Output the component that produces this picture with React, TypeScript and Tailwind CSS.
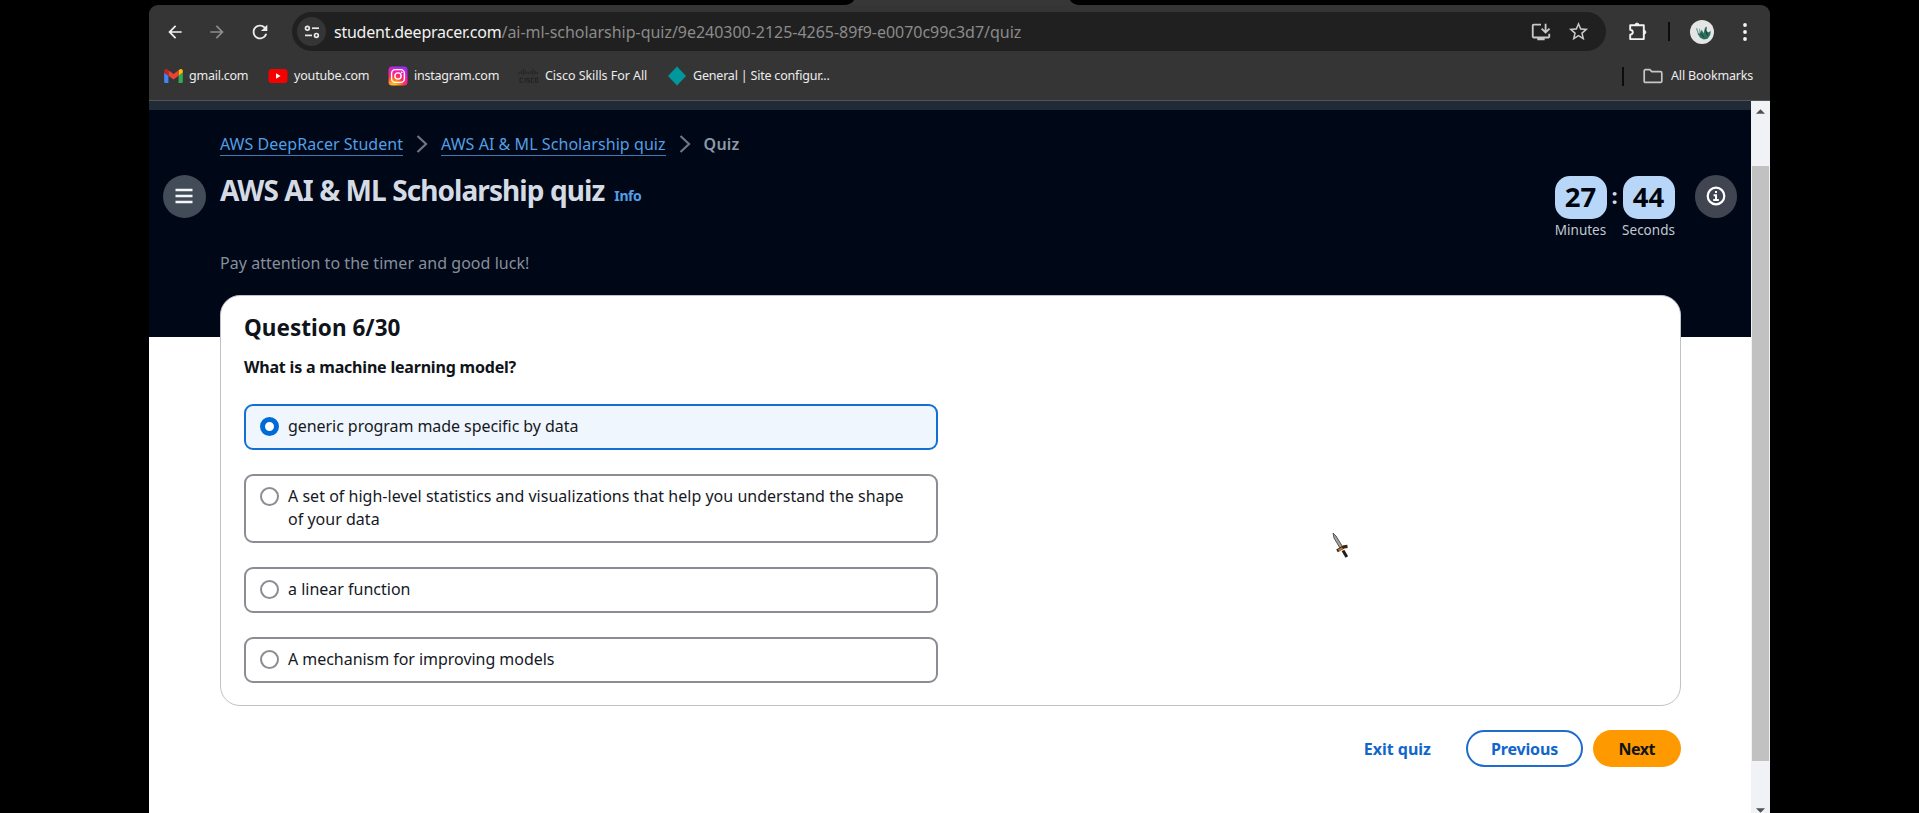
import type { ReactNode } from "react";
import { MdOutlineInstallDesktop, MdStarBorder, MdArrowBack, MdArrowForward, MdRefresh } from "react-icons/md";

function GmailIcon() {
  return (
    <svg viewBox="52 42 88 66" className="h-[14px] w-[19px]">
      <path fill="#4285f4" d="M58 108h14V74L52 59v43c0 3.32 2.69 6 6 6" />
      <path fill="#34a853" d="M120 108h14c3.32 0 6-2.69 6-6V59l-20 15" />
      <path fill="#fbbc04" d="M120 48v26l20-15v-8c0-7.42-8.47-11.65-14.4-7.2" />
      <path fill="#ea4335" d="M72 74V48l24 18 24-18v26L96 92" />
      <path fill="#c5221f" d="M52 51v8l20 15V48l-5.6-4.2c-5.94-4.45-14.4-.22-14.4 7.2" />
    </svg>
  );
}

function YoutubeIcon() {
  return (
    <svg viewBox="0 0 20 14" className="h-[14px] w-[20px]">
      <rect x="0.5" width="19" height="14" rx="3.6" fill="#f80000" />
      <path d="M8 4.3v5.400L12.600 7z" fill="#fff" />
    </svg>
  );
}

function InstagramIcon() {
  return (
    <svg viewBox="0 0 20 20" className="h-5 w-5">
      <defs>
        <radialGradient id="ig" cx="0.28" cy="1.05" r="1.1">
          <stop offset="0" stopColor="#ffd23c" />
          <stop offset="0.25" stopColor="#ff9a1f" />
          <stop offset="0.5" stopColor="#ff2f55" />
          <stop offset="0.75" stopColor="#ef1fb4" />
          <stop offset="1" stopColor="#9b2df0" />
        </radialGradient>
      </defs>
      <rect x="0.5" y="0.5" width="19" height="19" rx="3.5" fill="url(#ig)" />
      <rect x="3.6" y="3.6" width="12.8" height="12.8" rx="3.6" fill="none" stroke="#fff" strokeWidth="1.4" />
      <circle cx="10" cy="10" r="3.1" fill="none" stroke="#fff" strokeWidth="1.4" />
      <circle cx="13.7" cy="6.3" r="0.9" fill="#fff" />
    </svg>
  );
}

function CiscoIcon() {
  return (
    <svg viewBox="0 0 20 16" className="h-4 w-5" stroke="#232323" strokeWidth="1.1" fill="none">
      <path d="M1 4v2M3.3 3v3M5.6 1v6M7.9 3v3M10.2 4v2M12.5 3v3M14.8 1v6M17.1 3v3M19.2 4v2" />
      <path d="M5 10.2H2v4h3M7 10v4.5M11.5 10.2H9v2h2.3v2H8.8M16 10.2h-2.6v4H16M17.5 10.2h2v4h-2z" />
    </svg>
  );
}

function DiamondIcon() {
  return (
    <svg viewBox="0 0 20 20" className="h-5 w-5">
      <path d="M10 .5 19 10l-9 9.5L1 10z" fill="#00979d" />
    </svg>
  );
}

function FolderIcon() {
  return (
    <svg viewBox="0 0 20 16" className="h-4 w-5" fill="none" stroke="#c7c7c7" strokeWidth="1.7" strokeLinejoin="round">
      <path d="M1.2 2.9q0-1.2 1.2-1.200h4.400l2 2h8.800q1.200 0 1.200 1.200v8.300q0 1.200-1.200 1.200H2.400q-1.200 0-1.200-1.200z" />
    </svg>
  );
}

function TuneIcon() {
  return (
    <svg viewBox="0 0 16 16" className="h-4 w-4" fill="none" stroke="#e8e8e8" strokeWidth="1.7">
      <circle cx="3.4" cy="4.2" r="1.9" />
      <path d="M8 4.2h7" />
      <circle cx="12.4" cy="11.4" r="1.9" />
      <path d="M1 11.4h7" />
    </svg>
  );
}

function ExtensionIcon() {
  return (
    <svg viewBox="0 0 20 20" className="size-5" fill="none" stroke="#f3f3f3" strokeWidth="1.9" strokeLinejoin="round">
      <path d="M2.200 3.200h13.600v13.900H2.200v-4.400q2.600-.4 2.600-2.500T2.200 7.700z" />
      <path d="M7 3.200a2 2.200 0 0 1 4 0zM15.800 8.200a2.100 2 0 0 1 0 4z" fill="#f3f3f3" strokeWidth="0.800" />
    </svg>
  );
}

function MenuDots() {
  return (
    <svg viewBox="0 0 6 20" className="h-5 w-[6px]" fill="#f3f3f3">
      <circle cx="3" cy="3" r="1.900" />
      <circle cx="3" cy="10" r="1.900" />
      <circle cx="3" cy="17" r="1.900" />
    </svg>
  );
}

function Avatar() {
  return (
    <svg viewBox="0 0 24 24" className="h-6 w-6">
      <circle cx="12" cy="12" r="12" fill="#e4e6e6" />
      <path d="M6.500 8.200l1.800 5.300 3.500 3.700" stroke="#6f9c92" strokeWidth="1.200" fill="none" />
      <path d="M9.500 7.500l1.300 5.200.8-3.200 2 3.700 1.400-5.400 2-1.300-.6 4.800 2.200 1 2.200-1.300-.6 4-2.600 3.800-3.800.8-3.600-1.800-2.800-4.400 2.200.4z" fill="#2f6f60" />
      <path d="m11 13.500 3 3.800M15.500 9.500l2 6" stroke="#123f36" strokeWidth="1" />
    </svg>
  );
}

function Bookmark({ icon, label, width, className }: { icon: ReactNode; label: string; width: string; className: string }) {
  return (
    <a className={`flex shrink-0 items-center ${width}`}>
      <span className="flex w-5 justify-center">{icon}</span>
      <span className={`whitespace-nowrap text-[12.5px] leading-4 text-[#ececec] ${className}`}>{label}</span>
    </a>
  );
}

function BrowserChrome() {
  return (
    <div className="flex h-[101px] shrink-0 flex-col">
      <div className="flex h-[5px] bg-black pl-[694px]">
        <svg viewBox="0 0 238 5" className="h-[5px] w-[238px]">
          <path d="M0 5C6 5 9 3.500 11 0h216c2 3.500 5 5 11 5z" fill="#373737" />
        </svg>
      </div>
      <div className="flex h-[96px] flex-col rounded-t-[9px] border-b border-[#505658] bg-[#353535] pt-[7px]">
        <div className="flex h-[39px] items-center">
          <MdArrowBack className="ml-[16px] size-[20px] text-[#f1f1f1]" />
          <MdArrowForward className="ml-[22px] size-[20px] text-[#8c8c8c]" />
          <MdRefresh className="ml-[22px] size-[22px] text-[#ededed]" />
          <div className="ml-[21px] flex h-[39px] w-[1314px] items-center rounded-full bg-[#202020] pl-[5px] pr-[16px]">
            <span className="flex size-[29px] items-center justify-center rounded-full bg-[#353535]">
              <TuneIcon />
            </span>
            <span className="ml-[8px] whitespace-nowrap text-base tracking-[-0.24px] text-[#f2f2f2]">student.deepracer.com</span>
            <span className="grow whitespace-nowrap text-base tracking-[-0.03px] text-[#8b8b8b]">
              /ai-ml-scholarship-quiz/9e240300-2125-4265-89f9-e0070c99c3d7/quiz
            </span>
            <MdOutlineInstallDesktop className="size-[22px] text-[#c9c9c9]" />
            <MdStarBorder className="ml-[15px] size-[23px] text-[#c9c9c9]" />
          </div>
          <span className="ml-[22px]">
            <ExtensionIcon />
          </span>
          <span className="ml-[20px] h-[19px] w-[2px] bg-[#0c0c0c]" />
          <span className="ml-[20px]">
            <Avatar />
          </span>
          <span className="ml-[28px]">
            <MenuDots />
          </span>
        </div>
        <div className="mt-[15px] flex h-[20px] items-center pl-[14px] pr-[17px]">
          <Bookmark icon={<GmailIcon />} label="gmail.com" width="w-[105px]" className="ml-[6px] tracking-[-0.24px]" />
          <Bookmark icon={<YoutubeIcon />} label="youtube.com" width="w-[120px]" className="ml-[6px] tracking-[-0.17px]" />
          <Bookmark icon={<InstagramIcon />} label="instagram.com" width="w-[130px]" className="ml-[6px] tracking-[-0.25px]" />
          <Bookmark icon={<CiscoIcon />} label="Cisco Skills For All" width="w-[149px]" className="ml-[7px] tracking-[-0.05px]" />
          <Bookmark icon={<DiamondIcon />} label="General | Site configur..." width="w-[180px]" className="ml-[6px] tracking-[-0.2px]" />
          <span className="ml-auto h-[19px] w-[2px] bg-[#0c0c0c]" />
          <span className="ml-[19px] flex">
            <Bookmark icon={<FolderIcon />} label="All Bookmarks" width="w-[110px]" className="ml-[8px] tracking-[-0.15px]" />
          </span>
        </div>
      </div>
    </div>
  );
}

function Chevron() {
  return (
    <svg viewBox="0 0 12 18" className="h-[18px] w-[12px]" fill="none" stroke="#6f7681" strokeWidth="2.2">
      <path d="m1.500 1 8.500 8-8.500 8" />
    </svg>
  );
}

function TimeBox({ value, label }: { value: string; label: string }) {
  return (
    <div className="flex w-[52px] flex-col items-center">
      <div className="flex h-[43px] w-[52px] items-center justify-center rounded-[15px] bg-[#b8d7f8] pb-px text-[27.5px] font-bold text-[#00040c]">
        {value}
      </div>
      <div className="mt-px whitespace-nowrap text-[13.5px] leading-[20px] text-[#c3c8d2]">{label}</div>
    </div>
  );
}

function PageHeader() {
  return (
    <header className="flex h-[227px] shrink-0 bg-[#000716]">
      <div className="w-[71px] pl-[14px] pt-[65px]">
        <button className="flex size-[42.500px] items-center justify-center rounded-full bg-[#424c59]">
          <svg viewBox="0 0 18 16" className="h-4 w-[18px]" stroke="#f4f6f8" strokeWidth="2.6">
            <path d="M.5 2h17M.5 8h17M.5 14h17" />
          </svg>
        </button>
      </div>
      <div className="grow pt-[22px]">
        <nav className="flex h-6 items-center whitespace-nowrap text-base leading-6">
          <a className="h-6 border-b border-[#4179b8] tracking-[0.03px] text-[#539fe5]">AWS DeepRacer Student</a>
          <span className="ml-[13px]">
            <Chevron />
          </span>
          <a className="ml-[13px] h-6 border-b border-[#4179b8] tracking-[0.06px] text-[#539fe5]">AWS AI &amp; ML Scholarship quiz</a>
          <span className="ml-[13px]">
            <Chevron />
          </span>
          <span className="ml-[13px] font-semibold tracking-[0.2px] text-[#8d99a8]">Quiz</span>
        </nav>
        <div className="mt-[14px] flex h-10 items-baseline whitespace-nowrap">
          <h1 className="text-[28px] font-bold leading-10 tracking-[-0.92px] text-[#d5dbe4]">AWS AI &amp; ML Scholarship quiz</h1>
          <a className="ml-[10px] text-[14px] font-bold tracking-[-0.4px] text-[#539fe5]">Info</a>
        </div>
        <p className="mt-[41px] text-base leading-6 tracking-[0.04px] text-[#868f9c]">Pay attention to the timer and good luck!</p>
      </div>
      <div className="flex pr-[14px] pt-[65px]">
        <div className="mt-px flex">
          <TimeBox value="27" label="Minutes" />
          <div className="w-4 text-center text-[22px] font-bold leading-[38px] text-[#d5dbe4]">:</div>
          <TimeBox value="44" label="Seconds" />
        </div>
        <button className="ml-[20px] flex size-[42.500px] items-center justify-center rounded-full bg-[#414552]">
          <svg viewBox="0 0 20 20" className="size-5" fill="none" stroke="#fff" strokeWidth="2.2">
            <circle cx="10" cy="10" r="8.300" />
            <path d="M10 4.900v2.200M7.600 9.300H10v4.500M7.200 14h5.600" strokeWidth="2" />
          </svg>
        </button>
      </div>
    </header>
  );
}

function Option({ text, selected = false, className }: { text: string; selected?: boolean; className: string }) {
  return (
    <label
      className={`flex rounded-[9px] border-2 pb-[10px] pl-[13.500px] pr-[16px] pt-[9px] ${
        selected ? "border-[#1370d2] bg-[#f0f6fd]" : "border-[#8c8c94] bg-white"
      }`}
    >
      <span
        className={`mt-[2px] size-[19px] shrink-0 rounded-full bg-white ${
          selected ? "border-[5.500px] border-[#006ad6]" : "border-2 border-[#8c8c94]"
        }`}
      />
      <span className={`ml-[9.500px] text-base leading-[23px] text-[#16191f] ${className}`}>{text}</span>
    </label>
  );
}

function QuestionCard() {
  return (
    <section className="relative -mt-[42px] ml-[71px] h-[411px] w-[1461px] rounded-[20px] border border-[#c0c2c9] bg-white pl-[23px] pt-[17px]">
      <h2 className="text-[22.500px] font-bold leading-[30px] tracking-[0.03px] text-[#0f141a]">Question 6/30</h2>
      <p className="mt-[12px] text-base font-bold leading-6 tracking-[-0.2px] text-[#0f141a]">What is a machine learning model?</p>
      <div className="mt-[25px] flex w-[694px] flex-col gap-6">
        <Option text="generic program made specific by data" selected className="tracking-[-0.06px]" />
        <Option
          text="A set of high-level statistics and visualizations that help you understand the shape of your data"
          className="tracking-[0.02px]"
        />
        <Option text="a linear function" className="tracking-[0px]" />
        <Option text="A mechanism for improving models" className="tracking-[-0.04px]" />
      </div>
    </section>
  );
}

function Footer() {
  return (
    <footer className="mt-[24px] flex h-[37px] w-[1531.500px] items-center justify-end text-base font-bold leading-6">
      <button className="text-[#1166cc]">Exit quiz</button>
      <button className="ml-[35px] h-[37px] w-[117px] rounded-full border-2 border-[#1f6ccc] tracking-[-0.15px] text-[#1166cc]">Previous</button>
      <button className="ml-[10px] h-[37px] w-[87.500px] rounded-full bg-[#ff9900] tracking-[-0.5px] text-[#0f141a]">Next</button>
    </footer>
  );
}

function Scrollbar() {
  return (
    <div className="flex w-[19px] shrink-0 flex-col items-center bg-[#f1f2f5]">
      <svg viewBox="0 0 10 5" className="mt-[8px] h-[5px] w-[9px]">
        <path d="M5 0l5 5H0z" fill="#505050" />
      </svg>
      <div className="mt-[52px] h-[595px] w-[17px] bg-[#c1c1c1]" />
      <svg viewBox="0 0 10 5" className="mt-[47px] h-[5px] w-[9px]">
        <path d="M5 5l5-5H0z" fill="#505050" />
      </svg>
    </div>
  );
}

function SwordCursor() {
  return (
    <svg viewBox="0 0 18 28" className="absolute left-[1332px] top-[532px] h-[28px] w-[18px]">
      <path d="M1 1l1 5 6 10 2.500-1.500L4 4z" fill="#a2a2a2" stroke="#4a4a4a" strokeWidth="0.9" />
      <path d="M5 18.800l3.500-2 3.500-2 3.500-.5" stroke="#3a2413" strokeWidth="3.200" fill="none" />
      <path d="M6.500 18.300l4-2.300" stroke="#d07a26" strokeWidth="2" />
      <path d="M11 18.500l3.800 6.500" stroke="#1d1d1d" strokeWidth="3" />
    </svg>
  );
}

export default function App() {
  return (
    <div className="relative h-[813px] w-[1919px] overflow-hidden bg-black pl-[149px] font-['Noto_Sans',sans-serif]">
      <div className="flex h-[813px] w-[1621px] flex-col">
        <BrowserChrome />
        <div className="flex min-h-0 grow">
          <main className="flex w-[1602px] flex-col overflow-hidden bg-white">
            <div className="h-[9px] shrink-0 bg-[#202b37]" />
            <PageHeader />
            <QuestionCard />
            <Footer />
          </main>
          <Scrollbar />
        </div>
      </div>
      <SwordCursor />
    </div>
  );
}
